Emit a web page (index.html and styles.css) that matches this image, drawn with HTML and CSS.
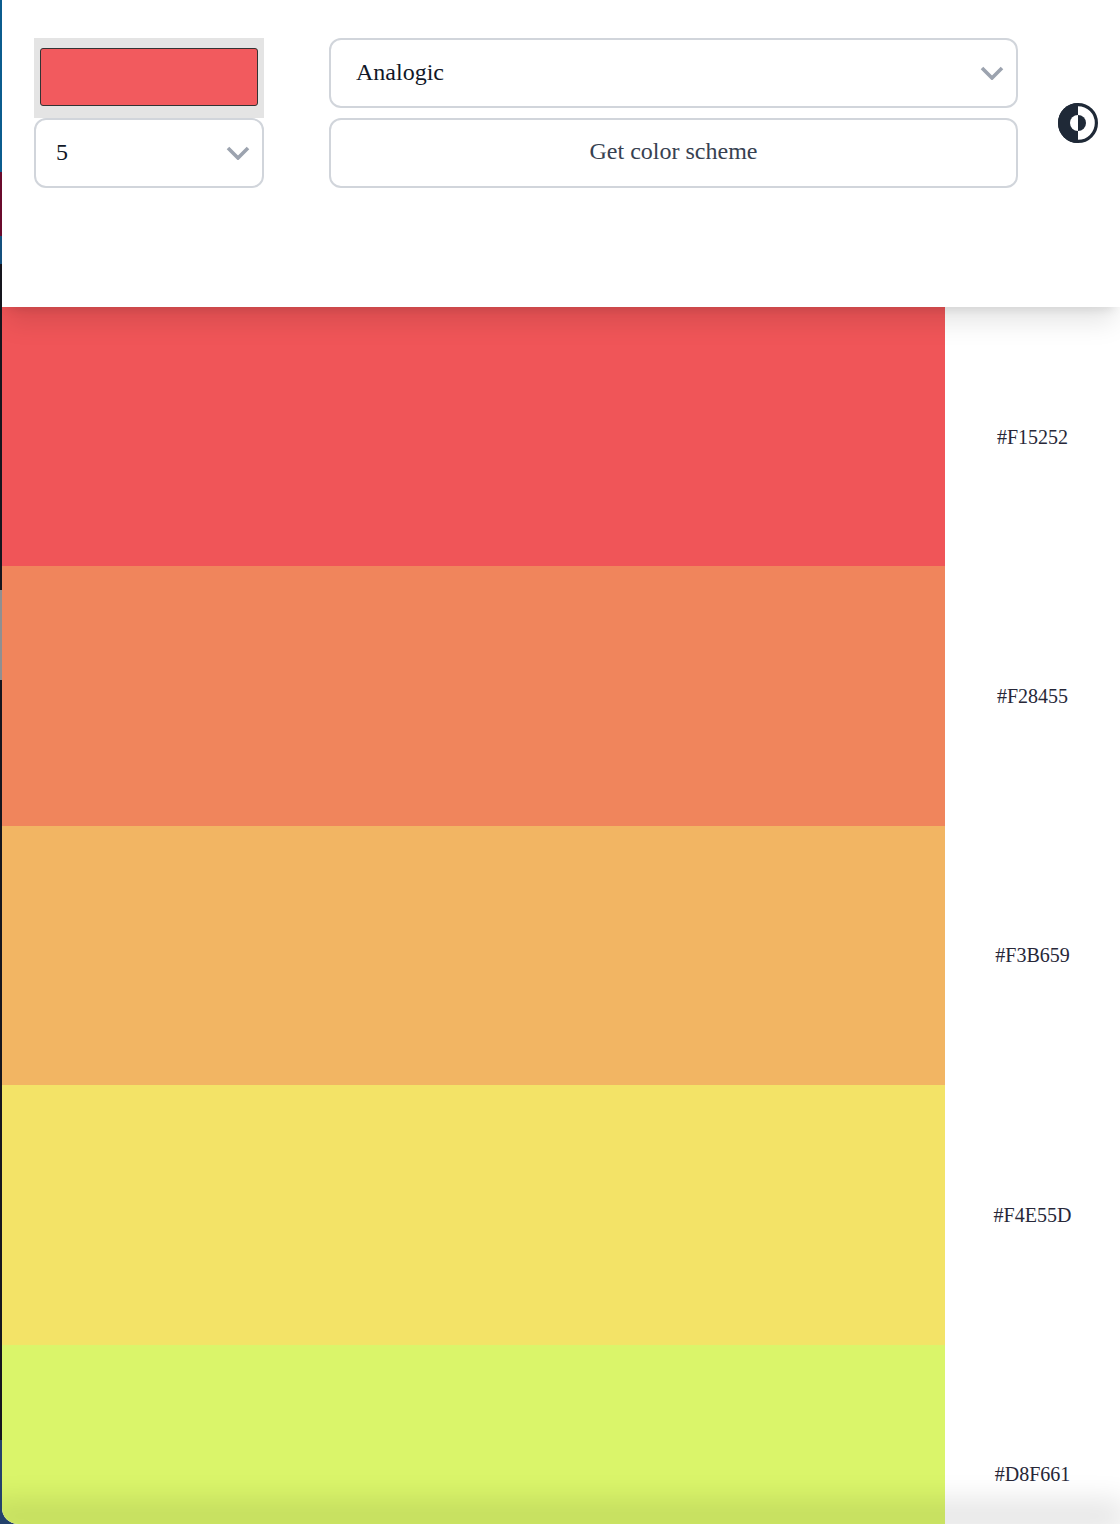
FILE: index.html
```html
<!DOCTYPE html>
<html lang="en">
  <head>
    <meta charset="UTF-8" />
    <meta name="viewport" content="width=device-width, initial-scale=1.0" />
    <title>Color Scheme</title>
    <link rel="stylesheet" href="styles.css">
  </head>

  <body>
    <div class="window">
      <header class="controls">
        <div class="left-col">
          <input type="color" class="color-pick" value="#f25a5e" />
          <select class="field count">
            <option>5</option>
          </select>
        </div>
        <div class="mid-col">
          <select class="field mode">
            <option>Analogic</option>
          </select>
          <button class="field get-btn">Get color scheme</button>
        </div>
        <button class="theme-btn" aria-label="Toggle theme">
          <svg width="40" height="40" viewBox="0 0 40 40">
            <circle cx="20" cy="20" r="18.4" fill="#fff" stroke="#1f2937" stroke-width="3.2" />
            <path d="M20 0a20 20 0 0 0 0 40z" fill="#1f2937" />
            <path d="M20 12a8 8 0 0 0 0 16z" fill="#fff" />
            <path d="M20 12a8 8 0 0 1 0 16z" fill="#1f2937" />
          </svg>
        </button>
      </header>

      <main class="scheme">
        <div class="swatch c1"></div>
        <p class="hex">#F15252</p>
        <div class="swatch c2"></div>
        <p class="hex">#F28455</p>
        <div class="swatch c3"></div>
        <p class="hex">#F3B659</p>
        <div class="swatch c4"></div>
        <p class="hex">#F4E55D</p>
        <div class="swatch c5"></div>
        <p class="hex">#D8F661</p>
      </main>

      <div class="bottom-shade"></div>
    </div>
  </body>
</html>
```

FILE: styles.css
```css
* {
  box-sizing: border-box;
}
html,
body {
  height: 100%;
}
body {
  margin: 0;
  overflow: hidden;
  font-family: "Liberation Serif", "Times New Roman", serif;
  /* bit of desktop showing behind the window */
  background: linear-gradient(
    to bottom,
    #0b5c8e 0,
    #0b5c8e 172px,
    #6a0a2c 172px,
    #6a0a2c 236px,
    #14507e 236px,
    #14507e 264px,
    #15151d 264px,
    #15151d 590px,
    #8f8f92 590px,
    #8f8f92 680px,
    #15151d 680px,
    #15151d 1440px,
    #24426b 1440px
  );
}
.window {
  position: relative;
  height: 1524px;
  margin-left: 2px;
  overflow: hidden;
  background: #fff;
  border-bottom-left-radius: 16px;
}

.controls {
  position: relative;
  z-index: 1;
  display: flex;
  align-items: flex-start;
  height: 307px;
  padding: 38px 0 0 32px;
  background: #fff;
  box-shadow: 0 20px 25px -5px rgba(0, 0, 0, 0.1),
    0 8px 10px -6px rgba(0, 0, 0, 0.1);
}
.left-col {
  display: flex;
  flex-direction: column;
  width: 230px;
  margin-right: 65px;
}
.mid-col {
  display: flex;
  flex-direction: column;
  gap: 10px;
  width: 689px;
  margin-right: 40px;
}
.color-pick {
  display: block;
  width: 100%;
  height: 80px;
  padding: 10px 6px 12px;
  border: none;
  background: #e4e4e4;
  appearance: none;
  -webkit-appearance: none;
}
.color-pick::-webkit-color-swatch-wrapper {
  padding: 0;
}
.color-pick::-webkit-color-swatch {
  border: 1px solid #333;
  border-radius: 3px;
}
.field {
  display: block;
  width: 100%;
  height: 70px;
  border: 2px solid #d1d5db;
  border-radius: 12px;
  background-color: #fff;
  font-family: inherit;
  font-size: 24px;
}
select.field {
  padding: 0 50px 2px 20px;
  color: #111827;
  appearance: none;
  -webkit-appearance: none;
  background-image: url("data:image/svg+xml,%3Csvg xmlns='http://www.w3.org/2000/svg' width='24' height='14' viewBox='0 0 24 14'%3E%3Cpath d='M2 2l10 10L22 2' fill='none' stroke='%239ca3af' stroke-width='3.6'/%3E%3C/svg%3E");
  background-repeat: no-repeat;
  background-position: right 12px center;
}
select.mode {
  padding-left: 25px;
}
.get-btn {
  padding: 0 0 4px;
  color: #374151;
}
.theme-btn {
  width: 40px;
  height: 40px;
  margin-top: 65px;
  padding: 0;
  border: none;
  background: none;
}
.theme-btn svg {
  display: block;
}

.scheme {
  display: grid;
  grid-template-columns: 943px 175px;
  grid-auto-rows: 259.4px;
}
.swatch {
  height: 100%;
}
.c1 {
  background: #f05558;
}
.c2 {
  background: #f0855c;
}
.c3 {
  background: #f2b563;
}
.c4 {
  background: #f3e367;
}
.c5 {
  background: #daf56a;
}
.hex {
  display: flex;
  align-items: center;
  justify-content: center;
  margin: 0;
  padding: 1px 0 0;
  color: #272738;
  font-size: 20px;
}

.bottom-shade {
  position: absolute;
  left: 0;
  right: 8px;
  bottom: 0;
  height: 0;
  box-shadow: 0 -8px 30px 14px rgba(0, 0, 0, 0.12);
}
```
